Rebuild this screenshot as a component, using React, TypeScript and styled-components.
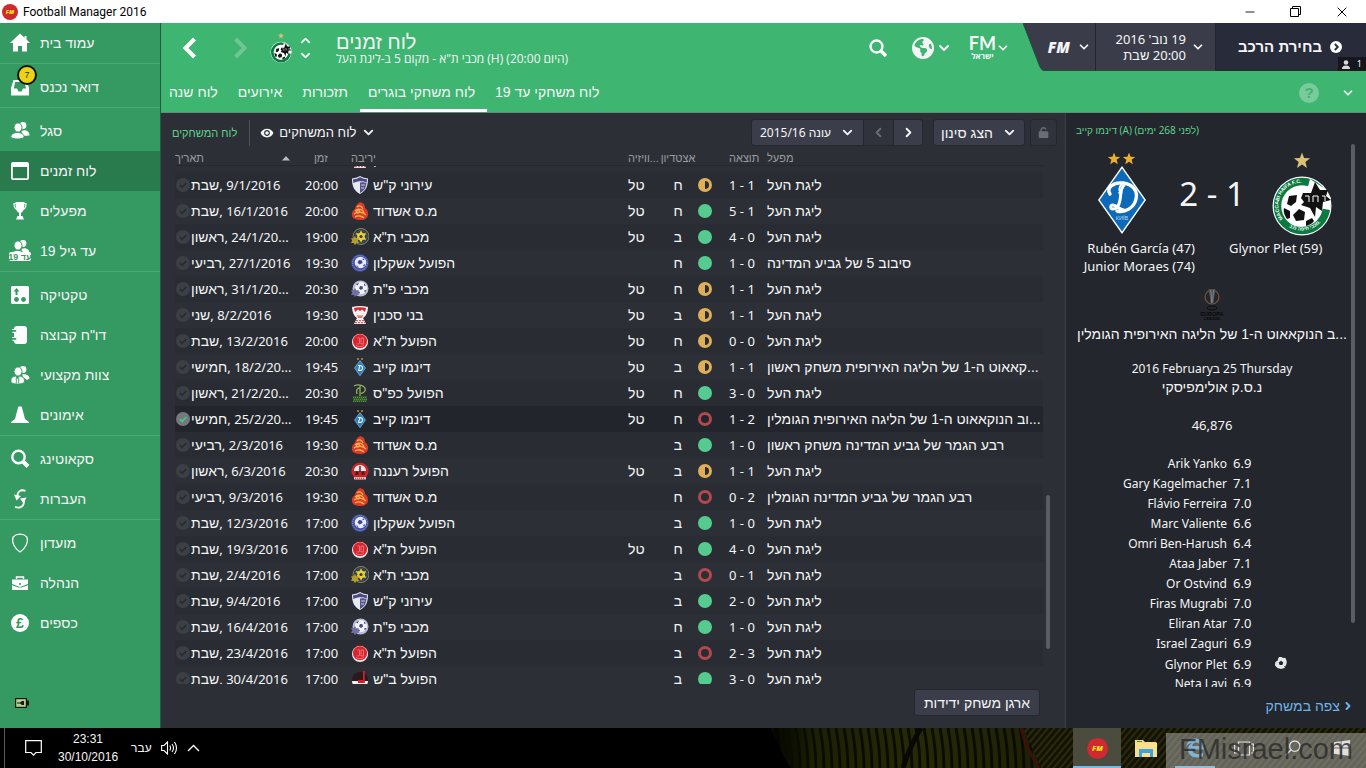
import React, { useLayoutEffect, useRef } from "react";
import styled, { createGlobalStyle, css } from "styled-components";
import { ChevronDown, ChevronLeft, ChevronRight, ChevronUp, Minus, X } from "lucide-react";
import { FaEarthAmericas, FaUnlock } from "react-icons/fa6";
import { MdRemoveRedEye } from "react-icons/md";

const GlobalStyle = createGlobalStyle`
  *, *::before, *::after { box-sizing: border-box; }
  body {
    margin: 0;
    background: #000;
    color: #f4f5f6;
    font-family: "Liberation Sans", sans-serif;
    font-size: 14px;
    line-height: 18px;
  }
  button, select, input { font: inherit; color: inherit; }
  button { border: 0; background: none; padding: 0; cursor: pointer; }
  a { color: inherit; text-decoration: none; }
  svg { display: block; flex: none; }
`;

/* Noto Sans for digits and Latin text */
const latin = css`
  font-family: "Noto Sans", "Liberation Sans", sans-serif;
  font-size: 13px;
`;

/* ---------- window frame ---------- */

const Desktop = styled.div`
  display: flex;
  flex-direction: column;
  height: 100vh;
  min-height: 600px;
  overflow: hidden;
`;

const TitleBar = styled.header`
  display: flex;
  align-items: center;
  flex: none;
  height: 23px;
  padding: 0 16px 0 2px;
  background: #fff;
  color: #000;
`;

const WindowTitle = styled.h1`
  flex: 1;
  margin: 0 0 0 5px;
  font-family: Roboto, sans-serif;
  font-size: 12px;
  font-weight: 400;
`;

const WindowButtons = styled.div`
  display: flex;
  gap: 29px;
  color: #000;
`;

const WindowButton = styled.button`
  display: grid;
  place-items: center;
  width: 17px;
  height: 20px;
`;

const AppFrame = styled.div`
  display: flex;
  flex: 1;
  min-height: 0;
`;

/* ---------- sidebar ---------- */

const Sidebar = styled.nav`
  display: flex;
  flex-direction: column;
  flex: none;
  width: 161px;
  background: #359a61;
  border-right: 1px solid #26573f;
`;

const NavGroup = styled.div`
  & + & {
    border-top: 1px solid #4aa874;
    padding-top: 3px;
  }
`;

const NavLink = styled.a<{ $active?: boolean }>`
  display: flex;
  align-items: center;
  height: 40px;
  padding-left: 10px;
  gap: 10px;
  background: ${(p) => (p.$active ? "#297b4e" : "transparent")};
`;

const NavIcon = styled.span`
  position: relative;
  width: 20px;
  height: 20px;
`;

const Badge = styled.span`
  position: absolute;
  top: -12px;
  left: 7px;
  width: 20px;
  height: 20px;
  border: 2px solid #101408;
  border-radius: 50%;
  background: #ecd212;
  color: #3a3405;
  font-size: 9px;
  line-height: 16px;
  text-align: center;
`;

const Battery = styled.div`
  margin: auto 0 20px 15px;
`;

/* ---------- page header ---------- */

const Content = styled.div`
  display: flex;
  flex-direction: column;
  flex: 1;
  min-width: 0;
`;

const PageHeader = styled.header`
  flex: none;
  background: #3eb571;
  border-bottom: 1px solid #5d8f74;
`;

const HeaderTop = styled.div`
  display: flex;
  height: 48px;
`;

const HistoryButtons = styled.div`
  display: flex;
  align-items: center;
  gap: 22px;
  padding: 2px 0 0 15px;
  width: 108px;
`;

const PlainButton = styled.button<{ $dim?: boolean; $gap?: number }>`
  display: flex;
  align-items: center;
  gap: ${(p) => p.$gap ?? 0}px;
  opacity: ${(p) => (p.$dim ? 0.25 : 1)};
`;

const ClubSwitch = styled.div`
  display: flex;
  align-items: center;
  gap: 5px;
  padding-top: 2px;
  width: 67px;
`;

const Steps = styled.div`
  display: flex;
  flex-direction: column;
`;

const TitleBlock = styled.div`
  flex: 1;
  padding-top: 9px;
`;

const PageTitle = styled.h2`
  margin: 0;
  font-size: 20px;
  font-weight: 400;
  line-height: 20px;
`;

const Subtitle = styled.p`
  margin: 0;
  width: max-content;
  font-family: "Open Sans", sans-serif;
  font-size: 12px;
  line-height: 14px;
`;

const HeaderTools = styled.div`
  display: flex;
  align-items: center;
  gap: 17px;
  padding: 2px 13px 0 0;
  > :first-child { margin-right: 8px; }
`;

const Community = styled.span`
  display: flex;
  flex-direction: column;
  align-items: center;
  font-family: Lato, "Open Sans", sans-serif;
  font-size: 18px;
  font-weight: 700;
  line-height: 15px;
  small {
    font-family: "Open Sans", sans-serif;
    font-size: 8px;
    line-height: 10px;
  }
`;

const StatusCluster = styled.div`
  display: flex;
`;

const StatusButton = styled.button<{ $width: number; $gap: number; $end: number }>`
  display: flex;
  align-items: center;
  justify-content: flex-end;
  gap: ${(p) => p.$gap}px;
  width: ${(p) => p.$width}px;
  height: 48px;
  padding-right: ${(p) => p.$end}px;
  background: #3a3d49;
  border-right: 1px solid #22252e;
  border-bottom: 1px solid #2a4a42;
  ${latin}
  line-height: 16px;
  text-align: right;
`;

const ContinueButton = styled.button`
  position: relative;
  display: flex;
  align-items: center;
  justify-content: flex-end;
  gap: 8px;
  width: 150px;
  height: 48px;
  padding-right: 24px;
  background: #282b39;
  font-size: 15px;
  font-weight: 700;
`;

const ManagerCount = styled.span`
  position: absolute;
  right: 0;
  bottom: 0;
  display: flex;
  align-items: center;
  gap: 7px;
  height: 14px;
  padding: 0 4px;
  background: #15171d;
  font-family: "Noto Sans", sans-serif;
  font-size: 9px;
  font-weight: 400;
  line-height: 14px;
`;

const FmMark = styled.span`
  font-family: "Open Sans", sans-serif;
  font-size: 15px;
  font-style: italic;
  font-weight: 800;
`;

const TabBar = styled.nav`
  display: flex;
  height: 41px;
`;

const Tab = styled.a<{ $active?: boolean }>`
  display: flex;
  align-items: center;
  padding: 3px 12px 0 8px;
  border-bottom: 3px solid ${(p) => (p.$active ? "#fff" : "transparent")};
`;

const TabTools = styled.div`
  display: flex;
  align-items: center;
  gap: 22px;
  margin-left: auto;
  padding: 3px 11px 0 0;
`;

const Help = styled.button`
  width: 20px;
  height: 20px;
  border-radius: 50%;
  background: #79cb9b;
  color: #3eb571;
  font-size: 15px;
  font-weight: 700;
  line-height: 20px;
`;

/* ---------- fixtures ---------- */

const Body = styled.div`
  display: flex;
  flex: 1;
  min-height: 0;
`;

const Fixtures = styled.main`
  display: flex;
  flex-direction: column;
  flex: 1;
  min-width: 0;
  background: #2c3036;
`;

const Toolbar = styled.div`
  display: flex;
  align-items: center;
  flex: none;
  gap: 10px;
  height: 37px;
  padding: 2px 8px 0 11px;
`;

const ViewName = styled.span`
  padding-right: 12px;
  border-right: 1px solid #4b4f56;
  color: #5fd08e;
  font-size: 11px;
  line-height: 26px;
`;

const ViewButton = styled.button`
  display: flex;
  align-items: center;
  gap: 5px;
  margin-right: auto;
  font-size: 13px;
`;

const ButtonStrip = styled.div`
  display: flex;
`;

const ToolButton = styled.button<{ $width: number; $faint?: boolean }>`
  display: flex;
  align-items: center;
  justify-content: center;
  gap: 9px;
  width: ${(p) => p.$width}px;
  height: 27px;
  background: ${(p) => (p.$faint ? "#30333c" : "#3b3e4a")};
  border: 1px solid #24272d;
  border-left-width: 0;
  color: ${(p) => (p.$faint ? "#6a6d74" : "#f4f5f6")};
  &:first-child { border-radius: 3px 0 0 3px; border-left-width: 1px; }
  &:last-child { border-radius: 0 3px 3px 0; }
  &:only-child { border-radius: 3px; }
`;

const SeasonLabel = styled.span`
  font-family: "Noto Sans", "Liberation Sans", sans-serif;
  font-size: 12px;
`;

const FilterGroup = styled.div`
  display: flex;
  gap: 5px;
`;

const TableArea = styled.div`
  display: flex;
  flex: 1;
  min-height: 0;
  gap: 3px;
  padding: 0 15px 0 14px;
`;

const FixtureTable = styled.table`
  display: flex;
  flex-direction: column;
  flex: 1;
  min-width: 0;
`;

const gridRow = css`
  display: grid;
  grid-template-columns: 126px 50px 1fr 33px 34px 28px 43px 1fr;
`;

const Thead = styled.thead`
  display: block;
  flex: none;
  height: 16px;
  border-bottom: 1px solid #25282d;
`;

const HeadRow = styled.tr`
  ${gridRow}
`;

const Th = styled.th<{ $pad?: number; $center?: boolean }>`
  display: flex;
  justify-content: ${(p) => (p.$center ? "center" : "flex-start")};
  padding: 0 0 0 ${(p) => p.$pad ?? 0}px;
  color: #9b9da1;
  font-size: 11px;
  font-weight: 400;
  line-height: 16px;
  white-space: nowrap;
`;

const SortHead = styled.span`
  display: flex;
  flex: 1;
  align-items: center;
  justify-content: space-between;
  padding-right: 11px;
`;

const Tbody = styled.tbody`
  display: block;
  flex: 1;
  min-height: 0;
  overflow-y: auto;
  scrollbar-width: none;
`;

const Tr = styled.tr<{ $selected?: boolean }>`
  ${gridRow}
  height: 26px;
  &:nth-child(even) { background: #292d33; }
  ${(p) =>
    p.$selected &&
    css`
      && { background: #22252b; }
    `}
`;

const Td = styled.td<{ $pad?: number; $gap?: number; $center?: boolean; $latin?: boolean }>`
  display: flex;
  align-items: center;
  justify-content: ${(p) => (p.$center ? "center" : "flex-start")};
  gap: ${(p) => p.$gap ?? 0}px;
  min-width: 0;
  padding: 0 0 0 ${(p) => p.$pad ?? 0}px;
  overflow: hidden;
  white-space: nowrap;
  ${(p) => p.$latin && latin}
`;

const DayName = styled.span`
  font-family: "Liberation Sans", sans-serif;
  font-size: 14px;
`;

const ScrollTrack = styled.div`
  display: flex;
  flex-direction: column;
  flex: none;
  width: 4px;
`;

const ScrollGap = styled.span<{ $grow: number }>`
  flex: ${(p) => p.$grow} 0 0;
`;

const ScrollThumb = styled.span<{ $grow: number }>`
  flex: ${(p) => p.$grow} 0 0;
  border-radius: 2px;
  background: #5b5d62;
`;

const FixturesFooter = styled.footer`
  display: flex;
  justify-content: flex-end;
  flex: none;
  height: 44px;
  padding: 5px 25px 0 0;
`;

/* ---------- match panel ---------- */

const MatchPanel = styled.aside`
  display: flex;
  flex-direction: column;
  flex: none;
  width: 301px;
  background: #23262c;
  border-left: 1px solid #3a3e46;
`;

const PanelTitle = styled.a`
  flex: none;
  height: 31px;
  padding: 8px 0 0 10px;
  color: #5fd08e;
  font-family: "Noto Sans", "Liberation Sans", sans-serif;
  font-size: 10px;
  text-align: left;
`;

const PanelScroll = styled.div`
  display: flex;
  flex: 1;
  min-height: 0;
  padding: 0 11px 0 9px;
  gap: 2px;
`;

const PanelBody = styled.div`
  flex: 1;
  min-width: 0;
  overflow: hidden;
  text-align: center;
`;

const ScoreLine = styled.div`
  display: grid;
  grid-template-columns: 1fr 86px 1fr;
  align-items: center;
  justify-items: center;
  height: 95px;
  padding-top: 5px;
`;

const Score = styled.strong`
  font-family: "Noto Sans", sans-serif;
  font-size: 33px;
  font-weight: 400;
  line-height: 40px;
  white-space: nowrap;
`;

const Scorers = styled.div`
  display: grid;
  grid-template-columns: 1fr 1fr;
  column-gap: 34px;
  ${latin}
  text-align: left;
  > :first-child { text-align: right; }
`;

const CompetitionLogo = styled.div`
  display: flex;
  justify-content: center;
  padding: 14px 0 5px;
`;

const Line = styled.p<{ $top?: number; $latin?: boolean }>`
  margin: ${(p) => p.$top ?? 0}px 0 0;
  white-space: nowrap;
  ${(p) => p.$latin && latin}
`;

const MatchDate = styled(Line)`
  font-size: 12px;
`;

const Ratings = styled.table`
  width: 100%;
  margin-top: 20px;
  border-spacing: 0;
  table-layout: fixed;
  ${latin}
  text-align: left;
  td { height: 20px; padding: 0; vertical-align: baseline; }
  td:first-child { padding-right: 6px; font-size: 12px; text-align: right; }
  svg { margin-top: 3px; }
`;

const PanelFooter = styled.footer`
  display: flex;
  justify-content: flex-end;
  flex: none;
  height: 41px;
  padding: 9px 12px 0 0;
`;

const WatchLink = styled.a`
  display: flex;
  align-items: center;
  gap: 2px;
  height: 20px;
  color: #6fb4e6;
`;

/* ---------- taskbar ---------- */

const Taskbar = styled.footer`
  position: relative;
  display: flex;
  align-items: center;
  flex: none;
  height: 40px;
  background: #000;
  font-size: 12px;
`;

const Wallpaper = styled.svg`
  position: absolute;
  right: 0;
  bottom: 0;
`;

const Tray = styled.div`
  display: flex;
  align-items: center;
  height: 40px;
  margin-left: 4px;
  padding-left: 20px;
  border-left: 1px solid #5a5a5a;
`;

const Clock = styled.time`
  margin: 0 13px 0 16px;
  text-align: center;
`;

const TrayItem = styled.button`
  margin-right: 9px;
`;

const Pinned = styled.div`
  position: relative;
  display: flex;
  gap: 1px;
  margin-left: auto;
`;

const PinnedButton = styled.button<{ $state?: "active" | "running" }>`
  display: grid;
  place-items: center;
  width: 48px;
  height: 40px;
  background-color: ${(p) => (p.$state === "active" ? "#4b4c3e" : "transparent")};
  background-image: ${(p) => (p.$state ? "linear-gradient(#76b9ed, #76b9ed)" : "none")};
  background-size: ${(p) => (p.$state === "active" ? 48 : 40)}px 2px;
  background-position: bottom;
  background-repeat: no-repeat;
`;

const Watermark = styled.div`
  position: absolute;
  right: 0;
  bottom: 0;
  width: 200px;
  height: 35px;
  background: rgba(190, 190, 190, 0.47);
  color: rgba(40, 40, 40, 0.78);
  font-size: 29px;
  line-height: 32px;
  text-align: center;
  pointer-events: none;
`;

/* ---------- icons ---------- */

const G = "#359a61";

const star = (cx: number, cy: number, r: number) =>
  Array.from({ length: 10 }, (_, i) => {
    const a = (Math.PI / 5) * i - Math.PI / 2;
    const q = i % 2 ? r * 0.42 : r;
    return `${(cx + q * Math.cos(a)).toFixed(2)},${(cy + q * Math.sin(a)).toFixed(2)}`;
  }).join(" ");

const People = ({ y = 0 }: { y?: number }) => (
  <g transform={`translate(0 ${y})`}>
    <circle cx="13" cy="4.500" r="3.400" />
    <path d="M11.500 10c3-1.500 8-.5 8 4.500l-7 .5z" />
    <ellipse cx="8" cy="6.500" rx="4" ry="4.600" stroke={G} strokeWidth="1" />
    <path d="M.8 16.500C.8 13 3.800 11.500 7.500 11.500s6.700 1.500 6.700 5c-4 2-9.400 2-13.400 0z" stroke={G} strokeWidth="1" />
  </g>
);

const navIcons: Record<string, React.ReactNode> = {
  home: <path d="M10 .5 0 10h3v8.500h5V13h4v5.500h5V10h3l-3.500-3.400V3h-2v1.700z" />,
  inbox: <path fillRule="evenodd" d="M3.500 3h13L19 11v7.500H1V11zM5.200 5 3.800 11.500H7l1.500 3h3l1.500-3h3L14.500 5z" />,
  people: <People />,
  calendar: <path fillRule="evenodd" d="M3 1h14a2 2 0 0 1 2 2v14a2 2 0 0 1-2 2H3a2 2 0 0 1-2-2V3a2 2 0 0 1 2-2zM2.800 6v11.200h14.400V6z" />,
  cup: (
    <>
      <path d="M5.500 1h9c0 6-.8 9.500-3.500 10.800V15h1.500l1.500 3.500H6L7.500 15H9v-3.200C6.300 10.500 5.500 7 5.500 1z" />
      <path d="M6 2.500H4c0 3.500 1 5.500 3 6M14 2.500h2c0 3.500-1 5.500-3 6" fill="none" stroke="#fff" strokeWidth="1.200" />
    </>
  ),
  u19: (
    <>
      <People y={-2} />
      <rect x="-1" y="11" width="22" height="9" rx="2" />
      <text x="10" y="18.500" fontSize="9" fontWeight="700" textAnchor="middle" fill={G}>19 עד</text>
    </>
  ),
  tactics: (
    <>
      <rect x="1" y="1" width="18" height="18" rx="1.500" />
      <g fill={G}>
        <path d="m6.500 3 3 3.500H7.500V10h-2V6.500h-2z" />
        <circle cx="6.500" cy="14.500" r="2.400" />
        <circle cx="13.500" cy="14.500" r="2.400" />
      </g>
    </>
  ),
  report: (
    <>
      <rect x="4" y="1" width="13" height="18" rx="3" />
      <g fill="none" stroke={G} strokeWidth="3"><path d="M3 5.900h4M3 13.900h4" /></g>
      <g fill="none" stroke="#fff" strokeWidth="1.200"><path d="M2 4.500h3.500a1.400 1.400 0 0 1 0 2.800H2.500M2 12.500h3.500a1.400 1.400 0 0 1 0 2.800H2.500" /></g>
    </>
  ),
  staff: (
    <>
      <circle cx="13" cy="4.500" r="3.400" />
      <path d="M12 9.500c3-1 7.500.5 7.500 4l-2.500 1.500-4-3z" />
      <ellipse cx="8" cy="6.500" rx="4" ry="4.600" stroke={G} strokeWidth="1" />
      <path d="M1 15c0-2 1.500-3.500 4.500-4l2 2.500 2-2.500c3 .5 4.800 2 4.800 4v2.500c-4 2-9.300 2-13.300 0z" stroke={G} strokeWidth=".8" />
      <path d="M6.300 13v5.500M8.700 13v5.500" stroke={G} strokeWidth=".9" />
    </>
  ),
  cone: <path d="M8.300 1.500h3.400L15 14l4 3v1H1v-1l4-3z" />,
  search: (
    <g fill="none" stroke="#fff" strokeWidth="2.400"><circle cx="8.500" cy="8" r="6.200" /><path d="m13 12.500 5 5" strokeWidth="4" /></g>
  ),
  transfer: (
    <>
      <path d="M15.500 2C11 0 7 2.500 7.500 7.500M5 17.800c5.500 2.200 9.500-1 9-6.500" fill="none" stroke="#fff" strokeWidth="1.800" />
      <path d="M4 5.500 11 7l-4.500 4.500zM16.500 8.500 10 9.500l3.500 5z" />
    </>
  ),
  club: <path d="M10 1.200c2.500 0 5.200 1 6.800 2.600 2 5-1.300 11.500-6.800 15.200C4.500 15.300 1.200 8.800 3.200 3.800 4.800 2.200 7.500 1.200 10 1.200z" fill="none" stroke="#fff" strokeWidth="1.200" />,
  board: (
    <>
      <path d="M2 6.500h16V11l-8 3-8-3z" />
      <path d="M2 12.200 8.500 14.600h3L18 12.200V17H2z" />
      <path d="M6.500 6V4h7v2" fill="none" stroke="#fff" strokeWidth="1.400" />
      <circle cx="10" cy="11" r="1" fill={G} />
    </>
  ),
  money: (
    <>
      <circle cx="10" cy="10" r="9" />
      <text x="10" y="15" fontSize="14" fontWeight="700" textAnchor="middle" fill={G}>£</text>
    </>
  ),
};

const FmBadge = ({ size }: { size: number }) => (
  <svg width={size} height={size} viewBox="0 0 20 20">
    <circle cx="10" cy="10" r="10" fill="#cf2a30" />
    <text x="10" y="12.500" fontSize="7" fontWeight="800" fontStyle="italic" fontFamily="Open Sans" textAnchor="middle" fill="#ffe81a">FM</text>
  </svg>
);

const Dynamo = ({ width, height }: { width: number; height: number }) => (
  <svg width={width} height={height} viewBox="0 0 50 82">
    <polygon points={star(17, 6, 6.5)} fill="#eeb02c" />
    <polygon points={star(32, 6, 6.5)} fill="#eeb02c" />
    <path d="M25 13 49 47 25 81 1 47z" fill="#fff" />
    <path d="M25 15.500 47.300 47 25 78.500 2.700 47z" fill="#0c6ab8" />
    <g fill="none" stroke="#fff" strokeLinecap="round">
      <path d="M13 41c-4-6 3-12 13-11 10 1 15 8 13 16-2 9-11 14-19 12" strokeWidth="3.400" />
      <path d="M26 33c-3 5-2 9-3 14-1 6-3 9-7 9-3 0-3-4 0-4 4 0 6 5 11 5" strokeWidth="3" />
      <path d="M22 37c1-7 6-9 6-6s-4 4-6 9" strokeWidth="1.600" />
    </g>
    <text x="25" y="67" fontSize="5.500" fontFamily="Liberation Sans" textAnchor="middle" fill="#b9d8f0">КИЇВ</text>
  </svg>
);

const MaccabiDisc = () => (
  <>
    <circle cx="30" cy="30" r="29.500" fill="#fff" />
    <circle cx="30" cy="30" r="24.500" fill="none" stroke="#0b7a41" strokeWidth="7.500" />
    <circle cx="28" cy="33" r="17.500" fill="#fff" />
    <path d="M38 3 52 12 59 22 58 34 46 32 34 18z" fill="#fff" />
    <g fill="#111">
      <path d="m27 33 6 3-1 8-8 1-3-6z" />
      <path d="m17 20 8-1-1 7-5 4-4-2zM12 32l6 3v7l-3 1c-2-3-4-7-3-11zM34 45l6-3 2 3c-2 3-5 4-8 5z" />
      <path d="m43 6 5 8h8l-2 6 5 4-8 2-1 9-6-4-1 10-5-9-9-3 3-3-3-4 2-5h8z" />
    </g>
    <path d="M33 20h4v6M41 26v-6h5v6M50 20h3v5" stroke="#fff" strokeWidth="1" fill="none" />
  </>
);

const Maccabi = () => (
  <svg width="60" height="84" viewBox="0 0 60 84">
    <polygon points={star(30, 9, 8.5)} fill="#d8c277" />
    <g transform="translate(0 24)">
      <MaccabiDisc />
      <path id="ringTop" d="M11 43A22.500 22.500 0 0 1 38 8.800" fill="none" />
      <path id="ringLow" d="M17 51A25 25 0 0 0 54 36" fill="none" />
      <g fontSize="5" fontWeight="700" fontFamily="Liberation Sans" fill="#fff">
        <text><textPath href="#ringTop">MACCABI HAIFA F.C.</textPath></text>
        <text direction="ltr"><textPath href="#ringLow">מכבי חיפה מ.כ.</textPath></text>
      </g>
    </g>
  </svg>
);

const SmallMaccabi = () => (
  <svg width="24" height="30" viewBox="0 0 66 84">
    <polygon points={star(33, 8, 9)} fill="#d8c277" />
    <g transform="translate(3 24)"><MaccabiDisc /></g>
  </svg>
);

type Club = "shmona" | "ashdod" | "mta" | "ashkelon" | "petah" | "sakhnin" | "hta" | "kiev" | "saba" | "raanana" | "sheva";

const crests: Record<Exclude<Club, "kiev">, React.ReactNode> = {
  shmona: (
    <>
      <path d="M1 2.500C5 2 7 1 9 0c2 1 4 2 8 2.500C17 10 15 15 9 18 3 15 1 10 1 2.500z" fill="#e8e9f1" />
      <path d="M2 3.300C6 3 7 2 9 1.200c2 .8 4 1.600 7 2.100l-.3 3.200C11 4.500 7 5 2.300 7z" fill="#4b4a86" />
      <path d="M9 6.500c3-.8 5 0 6.500.5-.5 5-2.500 8-6.500 10z" fill="#55548f" />
      <path d="M10 9h4M10 12h3" stroke="#c9cae0" strokeWidth="1" />
    </>
  ),
  ashdod: (
    <>
      <path d="M9 0c4 1 5 3 5 6 2 1 3 3 3 6 0 4-3 6-8 6s-9-2-8-7c0-2 2-3 3-4C4 4 6 2 9 0z" fill="#d93a2c" />
      <g fill="none" stroke="#f6b04a" strokeWidth="1.300">
        <path d="M6 5c2-2 5-1 6 2M4 9c3-3 8-2 9 2M3 12c4-3 9-2 12 1M4 15c3-2 7-1 9 1" />
        <circle cx="7" cy="9.500" r="1.500" />
      </g>
    </>
  ),
  mta: (
    <>
      <circle cx="10" cy="8.500" r="8" fill="#2c3a5c" stroke="#8d8a4c" strokeWidth="1" />
      <circle cx="10" cy="8.500" r="6" fill="none" stroke="#77764f" strokeWidth=".8" strokeDasharray="1 1" />
      <path d="m10 2.500 1.800 2.800h3.400L13.500 8.500l1.700 3.200h-3.400L10 14.500l-1.800-2.800H4.800l1.700-3.200-1.700-3.200h3.400z" fill="#ecd02c" />
      <path d="m4 8 1.200 2.200H8L6.800 12.500 8 15H5.300L4 17.200 2.700 15H0l1.200-2.500L0 10.200h2.700z" fill="#b39c2c" />
      <circle cx="10" cy="8.500" r="1.600" fill="#2c3a5c" />
    </>
  ),
  ashkelon: (
    <>
      <circle cx="9" cy="9" r="8.700" fill="#4450a4" />
      <circle cx="9" cy="9" r="7.400" fill="none" stroke="#aab1da" strokeWidth=".8" strokeDasharray="1 1" />
      <circle cx="9.500" cy="8.500" r="5.800" fill="#e9ecf8" />
      <path d="m8 6 3 .5.500 2.500-3 1.500-2-2zM5 11l2 1 .5 2zM12 11l2.500-1-1.500 3zM12 4l1.500 2h-2z" fill="#3b479c" />
    </>
  ),
  petah: (
    <>
      <circle cx="9.500" cy="8.500" r="8" fill="#b9bbdc" />
      <circle cx="10" cy="8" r="6" fill="#f3f3fb" />
      <path d="m9 6 2.500.3.500 2.200-2 1.500-2-1.500zM5 4l3-1-1.500 2.500zM13 3.500l2 2-2 .2zM13 10.500l2.500-.5-1.500 2.500zM6 11l3 1-1 2z" fill="#45438a" />
      <path d="m4 8 1.200 2.200H8L6.800 12.500 8 15H5.300L4 17.200 2.700 15H0l1.200-2.500L0 10.200h2.700z" fill="#6e6da6" />
    </>
  ),
  sakhnin: (
    <>
      <path d="M1 1c5-1.300 11-1.300 16 0-.3 6-2 9-5 11l2 4 1 2H3l1-2 2-4C3 10 1.500 7 1 1z" fill="#f7f1f1" />
      <path d="M3 2c4-1 8-1 12 0l-1 4-3-2.500L9 5 7 3.500 4 6z" fill="#d8272f" />
      <path d="M5.500 8c1 2 6 2 7 0l-1.500 4H7z" fill="#e2777b" />
      <path d="M5 14.700h8M4 16.700h10" stroke="#d8272f" strokeWidth=".9" strokeDasharray="2 1" />
    </>
  ),
  hta: (
    <>
      <path d="m5 3 1.500-3L9 2l2.500-2L13 3z" fill="#7c1d22" />
      <circle cx="9" cy="10" r="8" fill="#f3e9e9" />
      <circle cx="9" cy="9.300" r="7" fill="#d9232e" />
      <path d="M6.500 6h2v5c-.5 1.500-2 1.500-2.500.5M10 6h2.500v6H10zM5 13.500c3 1.500 5 1.500 8 0" fill="none" stroke="#ee8f95" strokeWidth=".7" />
    </>
  ),
  saba: (
    <>
      <path d="M3 2c4-2 9-1 11 2 1 3-1 5-4 5.500M9 1v11M9 4c-3 0-4 2-3 6" fill="none" stroke="#8fae5d" strokeWidth="1.300" />
      <path d="M2 12h14v6H2z" fill="#2c5a29" />
      <path d="M2 13.500h14M3 15.500h13M2 17.300h14" stroke="#7aa05a" strokeWidth=".8" strokeDasharray="1 1" />
    </>
  ),
  raanana: (
    <>
      <circle cx="9" cy="9" r="8.600" fill="#c9242b" />
      <path d="M3 9c0-4 3-6 6-6s6 2 6 6z" fill="#f1e3e3" />
      <path d="M8.300 4h1.400v6H8.300zM5 9l2.500 1v3H4zM10.500 10 13 9l1 4h-3.500z" fill="#54181b" />
      <path d="M3 15h12v2.500H3z" fill="#e9b8b8" />
      <path d="M4 16.200h10" stroke="#c9242b" strokeDasharray="1 1" />
    </>
  ),
  sheva: (
    <>
      <circle cx="9" cy="10" r="8" fill="#2a1a1d" />
      <path d="M1 11h16c0 4-3 7-8 7s-8-3-8-7z" fill="#f4f1f1" />
      <path d="M12 1h1.800v12H7v-3h5z" fill="#d4202a" />
    </>
  ),
};

const Crest = ({ club }: { club: Club }) =>
  club === "kiev" ? (
    <svg width="18" height="18" viewBox="0 0 18 18">
      <circle cx="7" cy="1" r="1" fill="#c9922c" />
      <circle cx="11" cy="1" r="1" fill="#c9922c" />
      <path d="M9 2.500 14.500 10 9 17.800 3.500 10z" fill="#2f80c3" stroke="#9cc6e6" strokeWidth=".6" />
      <path d="M7 7.500h2.500c3 .5 2.500 5-.5 5H7.500L9 7.500" fill="none" stroke="#e4f1fb" strokeWidth="1.100" />
    </svg>
  ) : (
    <svg width="18" height="18" viewBox="0 0 18 18">{crests[club]}</svg>
  );

const Tick = ({ on }: { on?: boolean }) => (
  <svg width="14" height="14" viewBox="0 0 14 14">
    <circle cx="7" cy="7" r="7" fill={on ? "#75787d" : "#3c3f45"} />
    <path d="m4 7.200 2.200 2.100L10.200 5" fill="none" stroke={on ? "#3fcf7f" : "#272a2f"} strokeWidth="1.600" />
  </svg>
);

type Result = "win" | "draw" | "loss";

const ResultDot = ({ result }: { result: Result }) => (
  <svg width="14" height="14" viewBox="0 0 14 14" role="img" aria-label={result}>
    {result === "win" && <circle cx="7" cy="7" r="7" fill="#56cb90" />}
    {result === "draw" && (
      <>
        <circle cx="7" cy="7" r="7" fill="#dfae58" />
        <path d="M7 3a4 4 0 0 1 0 8z" fill="#2a2d31" />
      </>
    )}
    {result === "loss" && <circle cx="7" cy="7" r="5.500" fill="none" stroke="#b04a4d" strokeWidth="3" />}
  </svg>
);

const ArrowMark = () => (
  <svg width="8" height="5" viewBox="0 0 8 5"><path d="M4 0 8 4.500H0z" fill="#b9bbbf" /></svg>
);

const BallIcon = () => (
  <svg width="12" height="12" viewBox="0 0 12 12">
    <path d="M4 0h2.500l1 .8L10.500 1l1.300 3.500-.5 3L9.500 11 6 12l-3.500-1L0 8.500.3 5 2 4z" fill="#e6e7e8" />
    <path d="m6 3.800 2.300 1.600-.9 2.600H4.600l-.9-2.600zM2 2l1.200.8L2.500 4zM9 9.500l1.300-.8-.3 1.500z" fill="#23262c" />
  </svg>
);

const EuropaLogo = () => (
  <svg width="24" height="31" viewBox="0 0 24 31">
    <circle cx="12" cy="8" r="7" fill="none" stroke="#7a5433" strokeWidth="1.200" />
    <path d="M8.500 0h7c-.5 6-2 9-2 15h-3C10.500 9 9 6 8.500 0z" fill="#4c4f54" />
    <path d="M10.500 1c1 5 1 9 1.200 13M13.500 1c0 4-1 7-.8 12" stroke="#8b8e92" strokeWidth=".8" fill="none" />
    <ellipse cx="12" cy="19" rx="5" ry="2" fill="none" stroke="#0b0c0e" />
    <g fill="#08090a" fontFamily="Liberation Sans" fontWeight="700" textAnchor="middle">
      <text x="12" y="26.500" fontSize="5.500">EUROPA</text>
      <text x="12" y="30.500" fontSize="3.800">LEAGUE</text>
    </g>
  </svg>
);

/* ---------- data ---------- */

const LRM = "\u200e";

const nav: { icon: string; label: string; active?: boolean; badge?: string }[][] = [
  [{ icon: "home", label: "עמוד בית" }],
  [{ icon: "inbox", label: "דואר נכנס", badge: "7" }],
  [
    { icon: "people", label: "סגל" },
    { icon: "calendar", label: "לוח זמנים", active: true },
    { icon: "cup", label: "מפעלים" },
    { icon: "u19", label: "עד גיל 19" },
  ],
  [
    { icon: "tactics", label: "טקטיקה" },
    { icon: "report", label: "דו\"ח קבוצה" },
    { icon: "staff", label: "צוות מקצועי" },
    { icon: "cone", label: "אימונים" },
  ],
  [
    { icon: "search", label: "סקאוטינג" },
    { icon: "transfer", label: "העברות" },
  ],
  [
    { icon: "club", label: "מועדון" },
    { icon: "board", label: "הנהלה" },
    { icon: "money", label: "כספים" },
  ],
];

const tabs = ["לוח שנה", "אירועים", "תזכורות", "לוח משחקי בוגרים", "לוח משחקי עד 19"];

const names: Record<Club, string> = {
  shmona: "עירוני ק\"ש",
  ashdod: "מ.ס אשדוד",
  mta: "מכבי ת\"א",
  ashkelon: "הפועל אשקלון",
  petah: "מכבי פ\"ת",
  sakhnin: "בני סכנין",
  hta: "הפועל ת\"א",
  kiev: "דינמו קייב",
  saba: "הפועל כפ\"ס",
  raanana: "הפועל רעננה",
  sheva: "הפועל ב\"ש",
};

const LEAGUE = "ליגת העל";

type Fixture = [string, string, string, Club, boolean, string, Result | null, string, string];

const fixtures: Fixture[] = [
  ["שבת", "2/1/2016", "", "sakhnin", false, "", null, "", ""],
  ["שבת", "9/1/2016", "20:00", "shmona", true, "ח", "draw", "1 - 1", LEAGUE],
  ["שבת", "16/1/2016", "20:00", "ashdod", true, "ח", "win", "5 - 1", LEAGUE],
  ["ראשון", "24/1/20...", "19:00", "mta", true, "ב", "win", "4 - 0", LEAGUE],
  ["רביעי", "27/1/2016", "19:30", "ashkelon", false, "ח", "win", "1 - 0", "סיבוב 5 של גביע המדינה"],
  ["ראשון", "31/1/20...", "20:30", "petah", true, "ח", "draw", "1 - 1", LEAGUE],
  ["שני", "8/2/2016", "19:30", "sakhnin", true, "ב", "draw", "1 - 1", LEAGUE],
  ["שבת", "13/2/2016", "20:00", "hta", true, "ח", "draw", "0 - 0", LEAGUE],
  ["חמישי", "18/2/20...", "19:45", "kiev", true, "ב", "draw", "1 - 1", "...קאאוט ה-1 של הליגה האירופית משחק ראשון"],
  ["ראשון", "21/2/20...", "20:30", "saba", true, "ח", "win", "3 - 0", LEAGUE],
  ["חמישי", "25/2/20...", "19:45", "kiev", true, "ח", "loss", "1 - 2", "...וב הנוקאאוט ה-1 של הליגה האירופית הגומלין"],
  ["רביעי", "2/3/2016", "19:30", "ashdod", false, "ב", "win", "1 - 0", "רבע הגמר של גביע המדינה משחק ראשון"],
  ["ראשון", "6/3/2016", "20:30", "raanana", true, "ב", "draw", "1 - 1", LEAGUE],
  ["רביעי", "9/3/2016", "19:30", "ashdod", false, "ח", "loss", "0 - 2", "רבע הגמר של גביע המדינה הגומלין"],
  ["שבת", "12/3/2016", "17:00", "ashkelon", false, "ב", "win", "1 - 0", LEAGUE],
  ["שבת", "19/3/2016", "17:00", "hta", true, "ח", "win", "4 - 0", LEAGUE],
  ["שבת", "2/4/2016", "17:00", "mta", false, "ב", "loss", "0 - 1", LEAGUE],
  ["שבת", "9/4/2016", "17:00", "shmona", false, "ב", "win", "2 - 0", LEAGUE],
  ["שבת", "16/4/2016", "17:00", "petah", false, "ח", "win", "1 - 0", LEAGUE],
  ["שבת", "23/4/2016", "17:00", "hta", false, "ב", "loss", "2 - 3", LEAGUE],
  ["שבת", "30/4/2016", "17:00", "sheva", false, "ב", "win", "3 - 0", LEAGUE],
];
const SELECTED = 10;

const ratings: [string, string][] = [
  ["Arik Yanko", "6.9"],
  ["Gary Kagelmacher", "7.1"],
  ["Flávio Ferreira", "7.0"],
  ["Marc Valiente", "6.6"],
  ["Omri Ben-Harush", "6.4"],
  ["Ataa Jaber", "7.1"],
  ["Or Ostvind", "6.9"],
  ["Firas Mugrabi", "7.0"],
  ["Eliran Atar", "7.0"],
  ["Israel Zaguri", "6.9"],
  ["Glynor Plet", "6.9"],
  ["Neta Lavi", "6.9"],
];

/* ---------- page ---------- */

function FixtureList() {
  const rows = useRef<HTMLTableSectionElement>(null);
  useLayoutEffect(() => {
    if (rows.current) rows.current.scrollTop = 20;
  }, []);
  return (
    <TableArea>
      <FixtureTable>
        <Thead>
          <HeadRow>
            <Th><SortHead>תאריך<ArrowMark /></SortHead></Th>
            <Th $pad={13}>זמן</Th>
            <Th>יריבה</Th>
            <Th><span dir="rtl">...וויזיה</span></Th>
            <Th $center>אצטדיון</Th>
            <Th aria-label="תוצאה" />
            <Th $pad={6}>תוצאה</Th>
            <Th $pad={1}>מפעל</Th>
          </HeadRow>
        </Thead>
        <Tbody ref={rows}>
          {fixtures.map(([day, date, time, club, tv, venue, result, score, comp], i) => (
            <Tr key={i} $selected={i === SELECTED}>
              <Td $pad={1} $gap={1} $latin>
                <Tick on={i === SELECTED} />
                <span><DayName>{day}</DayName>{`${LRM}, ${date}`}</span>
              </Td>
              <Td $pad={4} $latin>{time}</Td>
              <Td $gap={4}>
                <Crest club={club} />
                <span dir="rtl">{names[club]}</span>
              </Td>
              <Td>{tv ? "טל" : ""}</Td>
              <Td $center>{venue}</Td>
              <Td $pad={3}>{result && <ResultDot result={result} />}</Td>
              <Td $pad={6} $latin>{score}</Td>
              <Td $pad={1}><span dir="rtl">{comp}</span></Td>
            </Tr>
          ))}
        </Tbody>
      </FixtureTable>
      <ScrollTrack>
        <ScrollGap $grow={345} />
        <ScrollThumb $grow={154} />
        <ScrollGap $grow={35} />
      </ScrollTrack>
    </TableArea>
  );
}

function MatchSummary() {
  return (
    <MatchPanel>
      <PanelTitle href="#match" dir="rtl">(לפני 268 ימים) (A) דינמו קייב</PanelTitle>
      <PanelScroll>
        <PanelBody>
          <ScoreLine>
            <Dynamo width={50} height={82} />
            <Score>2 - 1</Score>
            <Maccabi />
          </ScoreLine>
          <Scorers>
            <div>Rubén García (47)<br />Junior Moraes (74)</div>
            <div>Glynor Plet (59)</div>
          </Scorers>
          <CompetitionLogo><EuropaLogo /></CompetitionLogo>
          <Line dir="rtl">...ב הנוקאאוט ה-1 של הליגה האירופית הגומלין</Line>
          <MatchDate $top={17} $latin>{`2016 Februaryב${LRM} 25 Thursday`}</MatchDate>
          <Line>נ.ס.ק אולימפיסקי</Line>
          <Line $top={20} $latin>46,876</Line>
          <Ratings>
            <colgroup>
              <col width="158" />
              <col width="42" />
              <col />
            </colgroup>
            <tbody>
              {ratings.map(([name, mark]) => (
                <tr key={name}>
                  <td>{name}</td>
                  <td>{mark}</td>
                  <td>{name === "Glynor Plet" && <BallIcon />}</td>
                </tr>
              ))}
            </tbody>
          </Ratings>
        </PanelBody>
        <ScrollTrack>
          <ScrollThumb $grow={479} />
          <ScrollGap $grow={64} />
        </ScrollTrack>
      </PanelScroll>
      <PanelFooter>
        <WatchLink href="#watch">צפה במשחק<ChevronRight size={12} strokeWidth={4} /></WatchLink>
      </PanelFooter>
    </MatchPanel>
  );
}

function WindowsTaskbar() {
  return (
    <Taskbar>
      <Wallpaper width="600" height="40" viewBox="0 0 600 40">
        <defs>
          <linearGradient id="leaf" x1="0" x2="1">
            <stop offset="0" stopColor="#000" />
            <stop offset=".15" stopColor="#1d2103" />
            <stop offset=".5" stopColor="#262a06" />
            <stop offset="1" stopColor="#1c1e06" />
          </linearGradient>
          <pattern id="ribs" width="8" height="40" patternUnits="userSpaceOnUse">
            <path d="M-2 0q4 20 4 40M6 0q4 20 4 40" fill="none" stroke="#0a0c01" strokeWidth="3" />
          </pattern>
          <pattern id="weave" width="5" height="5" patternUnits="userSpaceOnUse" patternTransform="rotate(-50)">
            <path d="M0 1h5" stroke="#343010" strokeWidth="1.500" />
          </pattern>
        </defs>
        <path d="M5 0h275l25 40H25Q12 20 5 0z" fill="url(#leaf)" />
        <path d="M5 0h275l25 40H25Q12 20 5 0z" fill="url(#ribs)" />
        <path d="M257 0h343v40H275z" fill="#121305" />
        <path d="M257 0h343v40H275z" fill="url(#weave)" />
        <path d="M255 0q6 22 18 40" fill="none" stroke="#3b1207" strokeWidth="3" />
        <path d="M155 0q-12 20-18 40" fill="none" stroke="#080a01" strokeWidth="5" />
      </Wallpaper>
      <Tray>
        <button aria-label="Notifications">
          <svg width="17" height="16" viewBox="0 0 17 16"><path d="M.7.7h15.600v11.800H11l-2.500 2.600L6 12.500H.7z" fill="none" stroke="#fff" strokeWidth="1.200" /></svg>
        </button>
        <Clock>23:31<br />30/10/2016</Clock>
        <TrayItem>עבר</TrayItem>
        <TrayItem aria-label="Volume">
          <svg width="17" height="14" viewBox="0 0 17 14" fill="none" stroke="#fff" strokeWidth="1.100">
            <path d="M.6 4.500h2.400L6.500 1v12L3 9.500H.6zM8.800 4.500q1.500 2.500 0 5M11 3q3 4 0 8M13.500 1q4 6 0 12" />
          </svg>
        </TrayItem>
        <TrayItem aria-label="Hidden icons">
          <svg width="13" height="8" viewBox="0 0 13 8"><path d="m1 7 5.500-5.500L12 7" fill="none" stroke="#fff" strokeWidth="1.300" /></svg>
        </TrayItem>
      </Tray>
      <Pinned>
        <PinnedButton $state="active" aria-label="Football Manager"><FmBadge size={21} /></PinnedButton>
        <PinnedButton aria-label="Explorer">
          <svg width="22" height="19" viewBox="0 0 22 19">
            <path d="M0 1h8l2 2h11.500v15H0z" fill="#f8d775" />
            <path d="M0 4h22v14H0z" fill="#fbe08c" />
            <path d="M4 10h14v8h-3v-4H7v4H4z" fill="#3aa3e0" />
            <path d="M2 2h5v1H2z" fill="#3a8f5c" />
          </svg>
        </PinnedButton>
        <PinnedButton $state="running" aria-label="Edge">
          <svg width="20" height="20" viewBox="0 0 20 20">
            <path d="M1 9C2 3 6 .500 10.500.500c5 0 8.500 3.500 8.500 8.500v2.500H7c.3 3 3 4.500 6 4.500 2 0 3.800-.5 5-1.300v3.600c-1.500.8-3.500 1.200-5.700 1.200C6.500 19.500 3 16 3 11.500 3 8.500 5 6 7.500 5 4.500 5 2.500 6.500 1 9zm6.200-1h7.500c0-2.200-1.400-3.500-3.600-3.500C9 4.500 7.500 6 7.200 8z" fill="#4fa8ea" />
          </svg>
        </PinnedButton>
        <PinnedButton aria-label="Task view">
          <svg width="20" height="15" viewBox="0 0 20 15" fill="none" stroke="#fff" strokeWidth="1.200"><path d="M4.500 1h11v13h-11zM3 3H.6v9H3M17 3h2.400v9H17" /></svg>
        </PinnedButton>
        <PinnedButton aria-label="Search">
          <svg width="16" height="16" viewBox="0 0 16 16" fill="none" stroke="#fff" strokeWidth="1.300"><circle cx="9.800" cy="6.200" r="5.200" /><path d="M6 10 .7 15.300" /></svg>
        </PinnedButton>
        <PinnedButton aria-label="Start">
          <svg width="16" height="16" viewBox="0 0 16 16" fill="#fff"><path d="M0 2.300 6.700 1.300v6.200H0zM7.500 1.200 16 0v7.500H7.500zM0 8.500h6.700v6.200L0 13.700zM7.500 8.500H16V16l-8.500-1.200z" /></svg>
        </PinnedButton>
      </Pinned>
      <Watermark>FMisrael.com</Watermark>
    </Taskbar>
  );
}

export default function App() {
  return (
    <Desktop>
      <GlobalStyle />
      <TitleBar>
        <FmBadge size={16} />
        <WindowTitle>Football Manager 2016</WindowTitle>
        <WindowButtons>
          <WindowButton aria-label="Minimize"><Minus size={14} strokeWidth={1.5} /></WindowButton>
          <WindowButton aria-label="Restore">
            <svg width="11" height="11" viewBox="0 0 11 11" fill="none" stroke="#000"><path d="M.5 2.500h8v8h-8zM2.500 2.500v-2h8v8h-2" /></svg>
          </WindowButton>
          <WindowButton aria-label="Close"><X size={16} strokeWidth={1.5} /></WindowButton>
        </WindowButtons>
      </TitleBar>

      <AppFrame>
        <Sidebar>
          {nav.map((group, i) => (
            <NavGroup key={i}>
              {group.map((item) => (
                <NavLink key={item.icon} href={`#${item.icon}`} $active={item.active}>
                  <NavIcon>
                    <svg width="20" height="20" viewBox="0 0 20 20" fill="#fff" overflow="visible">{navIcons[item.icon]}</svg>
                    {item.badge && <Badge>{item.badge}</Badge>}
                  </NavIcon>
                  <span dir="rtl">{item.label}</span>
                </NavLink>
              ))}
            </NavGroup>
          ))}
          <Battery>
            <svg width="14" height="10" viewBox="0 0 14 10">
              <path d="M0 0h12v2.500h2v5h-2V10H0z" fill="#16190f" />
              <path d="M1.200 1.200h9.600v7.600H1.200z" fill="#b9cf92" />
              <path d="M2 4.500h3L7 3h2v4H7L5 5.500H2z" fill="#16190f" />
            </svg>
          </Battery>
        </Sidebar>

        <Content>
          <PageHeader>
            <HeaderTop>
              <HistoryButtons>
                <PlainButton aria-label="Back"><svg width="28" height="24" viewBox="0 0 28 24"><path d="M18.500 3 9.500 12l9 9" fill="none" stroke="#fff" strokeWidth="4" /></svg></PlainButton>
                <PlainButton aria-label="Forward" $dim><svg width="28" height="24" viewBox="0 0 28 24"><path d="m9.500 3 9 9-9 9" fill="none" stroke="#fff" strokeWidth="4" /></svg></PlainButton>
              </HistoryButtons>
              <ClubSwitch>
                <SmallMaccabi />
                <Steps>
                  <PlainButton aria-label="Previous club"><ChevronUp size={15} strokeWidth={3} /></PlainButton>
                  <PlainButton aria-label="Next club"><ChevronDown size={15} strokeWidth={3} /></PlainButton>
                </Steps>
              </ClubSwitch>
              <TitleBlock>
                <PageTitle>לוח זמנים</PageTitle>
                <Subtitle dir="rtl">(היום 20:00) (H) מכבי ת"א - מקום 5 ב-ליגת העל</Subtitle>
              </TitleBlock>
              <HeaderTools>
                <PlainButton aria-label="Search">
                  <svg width="18" height="18" viewBox="0 0 18 18" fill="none" stroke="#fff"><circle cx="7.500" cy="7.500" r="6" strokeWidth="2.300" /><path d="m12 12 5 5" strokeWidth="3.400" /></svg>
                </PlainButton>
                <PlainButton aria-label="World" $gap={2}><FaEarthAmericas size={22} /><ChevronDown size={16} strokeWidth={3} /></PlainButton>
                <PlainButton><Community>FM<small>ישראל</small></Community><ChevronDown size={14} strokeWidth={3} /></PlainButton>
              </HeaderTools>
              <StatusCluster>
                <svg width="22" height="48" viewBox="0 0 22 48">
                  <path d="M0 0h22v48q-3 0-5-4z" fill="#3a3d49" />
                  <path d="m0 0 17 44q2 4 5 3.500" fill="none" stroke="#2a4a42" />
                </svg>
                <StatusButton $width={51} $gap={7} $end={4}><FmMark>FM</FmMark><ChevronDown size={14} strokeWidth={3} /></StatusButton>
                <StatusButton $width={120} $gap={5} $end={10}>
                  <span dir="rtl">19 נוב' 2016<br />20:00 שבת</span>
                  <ChevronDown size={14} strokeWidth={3} />
                </StatusButton>
                <ContinueButton>
                  בחירת הרכב
                  <svg width="12" height="12" viewBox="0 0 12 12"><circle cx="6" cy="6" r="6" fill="#fff" /><path d="m4.800 3 3 3-3 3" fill="none" stroke="#282b39" strokeWidth="1.800" /></svg>
                  <ManagerCount>
                    <svg width="8" height="9" viewBox="0 0 8 9" fill="#d8d9db"><circle cx="4" cy="2.500" r="2.300" /><path d="M0 9c0-2 1-3.500 4-3.500S8 7 8 9z" /></svg>
                    1
                  </ManagerCount>
                </ContinueButton>
              </StatusCluster>
            </HeaderTop>
            <TabBar>
              {tabs.map((t, i) => (
                <Tab key={t} href={`#tab-${i}`} $active={i === 3}><span dir="rtl">{t}</span></Tab>
              ))}
              <TabTools>
                <Help aria-label="Help">?</Help>
                <PlainButton aria-label="More"><ChevronDown size={14} strokeWidth={3} /></PlainButton>
              </TabTools>
            </TabBar>
          </PageHeader>

          <Body>
            <Fixtures>
              <Toolbar>
                <ViewName>לוח המשחקים</ViewName>
                <ViewButton><MdRemoveRedEye size={14} />לוח המשחקים<ChevronDown size={15} strokeWidth={3} /></ViewButton>
                <ButtonStrip>
                  <ToolButton $width={113}><SeasonLabel dir="rtl">עונה 2015/16</SeasonLabel><ChevronDown size={15} strokeWidth={3} /></ToolButton>
                  <ToolButton $width={30} $faint aria-label="Previous season"><ChevronLeft size={15} strokeWidth={3} /></ToolButton>
                  <ToolButton $width={29} aria-label="Next season"><ChevronRight size={15} strokeWidth={3} /></ToolButton>
                </ButtonStrip>
                <FilterGroup>
                  <ButtonStrip>
                    <ToolButton $width={92}>הצג סינון<ChevronDown size={15} strokeWidth={3} /></ToolButton>
                  </ButtonStrip>
                  <ButtonStrip>
                    <ToolButton $width={27} $faint aria-label="Unlock"><FaUnlock size={11} /></ToolButton>
                  </ButtonStrip>
                </FilterGroup>
              </Toolbar>
              <FixtureList />
              <FixturesFooter>
                <ButtonStrip><ToolButton $width={126}>ארגן משחק ידידות</ToolButton></ButtonStrip>
              </FixturesFooter>
            </Fixtures>
            <MatchSummary />
          </Body>
        </Content>
      </AppFrame>

      <WindowsTaskbar />
    </Desktop>
  );
}
